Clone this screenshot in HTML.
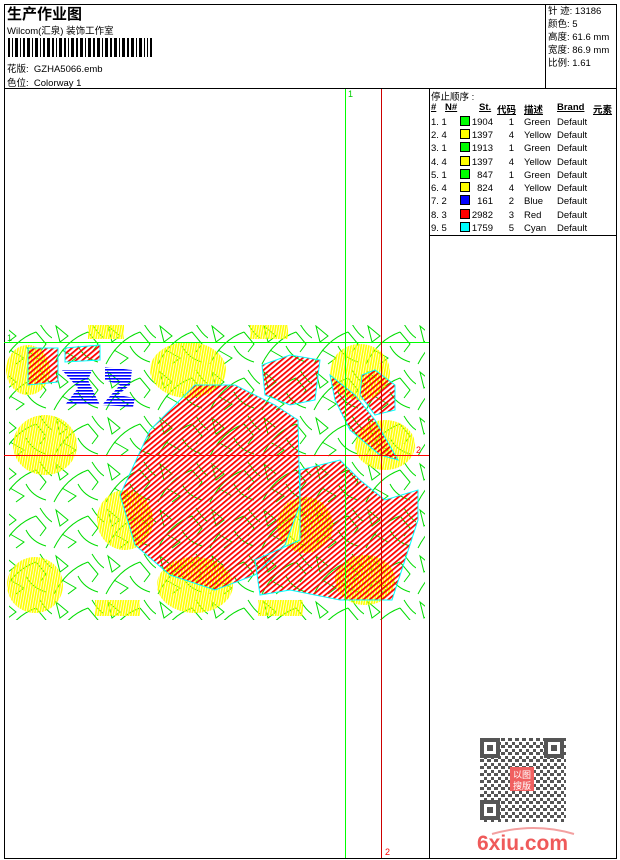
<!DOCTYPE html>
<html><head><meta charset="utf-8"><style>
*{margin:0;padding:0}
body{width:620px;height:860px;background:#fff;position:relative;overflow:hidden;font-family:"Liberation Sans","Noto Sans CJK SC",sans-serif;font-size:9.5px;color:#000}
.a{position:absolute;white-space:nowrap}
.l{position:absolute;background:#000}
</style></head><body>
<div class="l" style="left:4px;top:4px;width:613px;height:1px"></div>
<div class="l" style="left:4px;top:858px;width:613px;height:1px"></div>
<div class="l" style="left:4px;top:4px;width:1px;height:855px"></div>
<div class="l" style="left:616px;top:4px;width:1px;height:855px"></div>
<div class="l" style="left:4px;top:88px;width:613px;height:1px"></div>
<div class="l" style="left:545px;top:4px;width:1px;height:84px"></div>
<div class="l" style="left:429px;top:88px;width:1px;height:771px"></div>
<div class="l" style="left:429px;top:235px;width:188px;height:1px"></div>

<div class="a" style="left:7px;top:3px;font-size:15px;font-weight:bold">生产作业图</div>
<div class="a" style="left:7px;top:23px">Wilcom(汇泉) 装饰工作室</div>
<svg class="a" style="left:8px;top:38px" width="146" height="19">
<g fill="#000">
<rect x="0" y="0" width="2" height="19"/><rect x="4" y="0" width="1" height="19"/><rect x="7" y="0" width="3" height="19"/><rect x="12" y="0" width="1" height="19"/><rect x="15" y="0" width="2" height="19"/><rect x="19" y="0" width="3" height="19"/><rect x="24" y="0" width="1" height="19"/><rect x="27" y="0" width="3" height="19"/><rect x="32" y="0" width="1" height="19"/><rect x="35" y="0" width="2" height="19"/><rect x="39" y="0" width="3" height="19"/><rect x="44" y="0" width="2" height="19"/><rect x="48" y="0" width="1" height="19"/><rect x="51" y="0" width="3" height="19"/><rect x="56" y="0" width="2" height="19"/><rect x="60" y="0" width="1" height="19"/><rect x="63" y="0" width="3" height="19"/><rect x="68" y="0" width="2" height="19"/><rect x="72" y="0" width="3" height="19"/><rect x="77" y="0" width="1" height="19"/><rect x="80" y="0" width="3" height="19"/><rect x="85" y="0" width="2" height="19"/><rect x="89" y="0" width="3" height="19"/><rect x="94" y="0" width="1" height="19"/><rect x="97" y="0" width="3" height="19"/><rect x="102" y="0" width="2" height="19"/><rect x="106" y="0" width="3" height="19"/><rect x="111" y="0" width="1" height="19"/><rect x="114" y="0" width="3" height="19"/><rect x="119" y="0" width="2" height="19"/><rect x="123" y="0" width="3" height="19"/><rect x="128" y="0" width="1" height="19"/><rect x="131" y="0" width="3" height="19"/><rect x="136" y="0" width="1" height="19"/><rect x="139" y="0" width="1" height="19"/><rect x="142" y="0" width="2" height="19"/>
</g></svg>
<div class="a" style="left:7px;top:61px">花版:&nbsp; GZHA5066.emb</div>
<div class="a" style="left:7px;top:75px">色位:&nbsp; Colorway 1</div>

<div class="a" style="left:548px;top:5px;line-height:13px">针 迹: 13186<br>颜色: 5<br>高度: 61.6 mm<br>宽度: 86.9 mm<br>比例: 1.61</div>

<div class="a" style="left:431px;top:89px">停止顺序 :</div>
<div class="a" style="left:431px;top:102px;font-weight:bold;text-decoration:underline">#</div>
<div class="a" style="left:445px;top:102px;font-weight:bold;text-decoration:underline">N#</div>
<div class="a" style="left:479px;top:102px;font-weight:bold;text-decoration:underline">St.</div>
<div class="a" style="left:497px;top:102px;font-weight:bold;text-decoration:underline">代码</div>
<div class="a" style="left:524px;top:102px;font-weight:bold;text-decoration:underline">描述</div>
<div class="a" style="left:557px;top:102px;font-weight:bold;text-decoration:underline">Brand</div>
<div class="a" style="left:593px;top:102px;font-weight:bold;text-decoration:underline">元素</div>
<svg class="a" style="left:430px;top:115px" width="186" height="120" font-family="Liberation Sans, sans-serif" font-size="9.5">
<g>
<text x="1" y="10">1. 1</text><rect x="30.5" y="1.5" width="9" height="9" fill="#0f0" stroke="#000"/><text x="63" y="10" text-anchor="end">1904</text><text x="84" y="10" text-anchor="end">1</text><text x="94" y="10">Green</text><text x="127" y="10">Default</text>
<text x="1" y="23">2. 4</text><rect x="30.5" y="14.5" width="9" height="9" fill="#ff0" stroke="#000"/><text x="63" y="23" text-anchor="end">1397</text><text x="84" y="23" text-anchor="end">4</text><text x="94" y="23">Yellow</text><text x="127" y="23">Default</text>
<text x="1" y="36">3. 1</text><rect x="30.5" y="27.5" width="9" height="9" fill="#0f0" stroke="#000"/><text x="63" y="36" text-anchor="end">1913</text><text x="84" y="36" text-anchor="end">1</text><text x="94" y="36">Green</text><text x="127" y="36">Default</text>
<text x="1" y="50">4. 4</text><rect x="30.5" y="41.5" width="9" height="9" fill="#ff0" stroke="#000"/><text x="63" y="50" text-anchor="end">1397</text><text x="84" y="50" text-anchor="end">4</text><text x="94" y="50">Yellow</text><text x="127" y="50">Default</text>
<text x="1" y="63">5. 1</text><rect x="30.5" y="54.5" width="9" height="9" fill="#0f0" stroke="#000"/><text x="63" y="63" text-anchor="end">847</text><text x="84" y="63" text-anchor="end">1</text><text x="94" y="63">Green</text><text x="127" y="63">Default</text>
<text x="1" y="76">6. 4</text><rect x="30.5" y="67.5" width="9" height="9" fill="#ff0" stroke="#000"/><text x="63" y="76" text-anchor="end">824</text><text x="84" y="76" text-anchor="end">4</text><text x="94" y="76">Yellow</text><text x="127" y="76">Default</text>
<text x="1" y="89">7. 2</text><rect x="30.5" y="80.5" width="9" height="9" fill="#00f" stroke="#000"/><text x="63" y="89" text-anchor="end">161</text><text x="84" y="89" text-anchor="end">2</text><text x="94" y="89">Blue</text><text x="127" y="89">Default</text>
<text x="1" y="103">8. 3</text><rect x="30.5" y="94.5" width="9" height="9" fill="#f00" stroke="#000"/><text x="63" y="103" text-anchor="end">2982</text><text x="84" y="103" text-anchor="end">3</text><text x="94" y="103">Red</text><text x="127" y="103">Default</text>
<text x="1" y="116">9. 5</text><rect x="30.5" y="107.5" width="9" height="9" fill="#0ff" stroke="#000"/><text x="63" y="116" text-anchor="end">1759</text><text x="84" y="116" text-anchor="end">5</text><text x="94" y="116">Cyan</text><text x="127" y="116">Default</text>
</g></svg>

<svg class="a" style="left:0;top:0" width="430" height="860">
<defs>
<pattern id="yl" width="2.5" height="3" patternUnits="userSpaceOnUse" patternTransform="rotate(10)"><rect width="1.7" height="3" fill="#ff0"/></pattern>
<pattern id="rd" width="4" height="4" patternUnits="userSpaceOnUse" patternTransform="rotate(-40)"><rect width="4" height="1.8" fill="#f00"/></pattern>
<pattern id="gr" width="52" height="46" patternUnits="userSpaceOnUse">
<path d="M2 42 Q14 18 36 10 M10 28 L24 36 L16 42 M36 10 L46 22 L40 30 M40 2 Q46 12 52 16 M4 4 L16 14 L8 20 Z M26 24 Q32 36 46 40" fill="none" stroke="#0d0" stroke-width="1"/>
</pattern>
<pattern id="bl" width="3" height="3" patternUnits="userSpaceOnUse"><rect width="3" height="1.6" fill="#00f"/></pattern>
</defs>
<rect x="9" y="325" width="416" height="295" fill="url(#gr)"/>
<g fill="url(#yl)">
<ellipse cx="28" cy="370" rx="22" ry="25"/>
<ellipse cx="188" cy="370" rx="38" ry="28"/>
<ellipse cx="45" cy="445" rx="32" ry="30"/>
<ellipse cx="360" cy="372" rx="30" ry="28"/>
<ellipse cx="385" cy="445" rx="30" ry="25"/>
<ellipse cx="125" cy="520" rx="28" ry="30"/>
<ellipse cx="305" cy="525" rx="28" ry="28"/>
<ellipse cx="35" cy="585" rx="28" ry="28"/>
<ellipse cx="195" cy="585" rx="38" ry="28"/>
<ellipse cx="365" cy="580" rx="30" ry="25"/>
<rect x="88" y="325" width="36" height="14"/><rect x="250" y="325" width="38" height="14"/>
<rect x="95" y="600" width="45" height="16"/><rect x="258" y="600" width="45" height="16"/>
</g>
<g fill="url(#rd)" stroke="#0ff" stroke-width="1">
<path d="M120 495 L150 430 L195 385 L235 385 L275 405 L298 420 L300 505 L285 545 L255 575 L215 590 L170 575 L135 545 Z"/>
<path d="M262 365 L290 355 L320 360 L315 400 L290 405 L265 395 Z"/>
<path d="M330 375 L355 395 L375 420 L398 460 L380 455 L350 430 L335 400 Z"/>
<path d="M362 375 L375 370 L395 385 L395 410 L375 415 L360 395 Z"/>
<path d="M300 470 L340 460 L360 480 L385 500 L418 490 L418 520 L392 600 L340 600 L290 590 L260 595 L255 560 L300 540 Z"/>
<path d="M28 348 L58 348 L58 382 L28 385 Z"/>
<path d="M65 348 L100 345 L100 360 L65 362 Z"/>
</g>
<g fill="url(#bl)">
<path d="M62 370 L92 370 L88 380 L95 395 L100 405 L65 405 L78 388 Z"/>
<path d="M105 367 L132 370 L130 385 L118 395 L135 398 L133 407 L102 405 L120 385 L105 380 Z"/>
</g>
<g shape-rendering="crispEdges">
<rect x="4" y="342" width="425" height="1" fill="#0f0"/>
<rect x="345" y="89" width="1" height="769" fill="#0f0"/>
<rect x="4" y="455" width="425" height="1" fill="#f00"/>
<rect x="381" y="89" width="1" height="769" fill="#c00"/>
</g>
<text x="348" y="97" fill="#0c0" font-size="9" font-family="Liberation Sans">1</text>
<text x="7" y="341" fill="#0c0" font-size="9" font-family="Liberation Sans">1</text>
<text x="416" y="453" fill="#f00" font-size="9" font-family="Liberation Sans">2</text>
<text x="385" y="855" fill="#f00" font-size="9" font-family="Liberation Sans">2</text>
</svg>

<svg class="a" style="left:480px;top:738px" width="86" height="84">
<defs><pattern id="qr" width="7" height="7" patternUnits="userSpaceOnUse"><rect width="4" height="3" fill="#555"/><rect x="4" y="4" width="3" height="3" fill="#555"/></pattern></defs>
<rect width="86" height="84" fill="url(#qr)"/>
<g fill="#fff" stroke="#555" stroke-width="4"><rect x="2" y="2" width="16" height="16"/><rect x="66" y="2" width="16" height="16"/><rect x="2" y="64" width="16" height="16"/></g>
<g fill="#555"><rect x="7" y="7" width="6" height="6"/><rect x="71" y="7" width="6" height="6"/><rect x="7" y="69" width="6" height="6"/></g>
<rect x="30" y="29" width="24" height="24" fill="#f06060"/>
<text x="42" y="40" fill="#fff" font-size="9" text-anchor="middle" font-family="Noto Sans CJK SC">以图</text><text x="42" y="51" fill="#fff" font-size="9" text-anchor="middle" font-family="Noto Sans CJK SC">搜版</text>
</svg>
<svg class="a" style="left:474px;top:824px" width="102" height="30">
<path d="M18 10 Q60 -2 100 10" fill="none" stroke="#f3a0a0" stroke-width="2"/>
<text x="3" y="26" fill="#ef5a5a" font-size="21" font-weight="bold" font-family="Liberation Sans">6xiu.com</text>
</svg>
</body></html>
